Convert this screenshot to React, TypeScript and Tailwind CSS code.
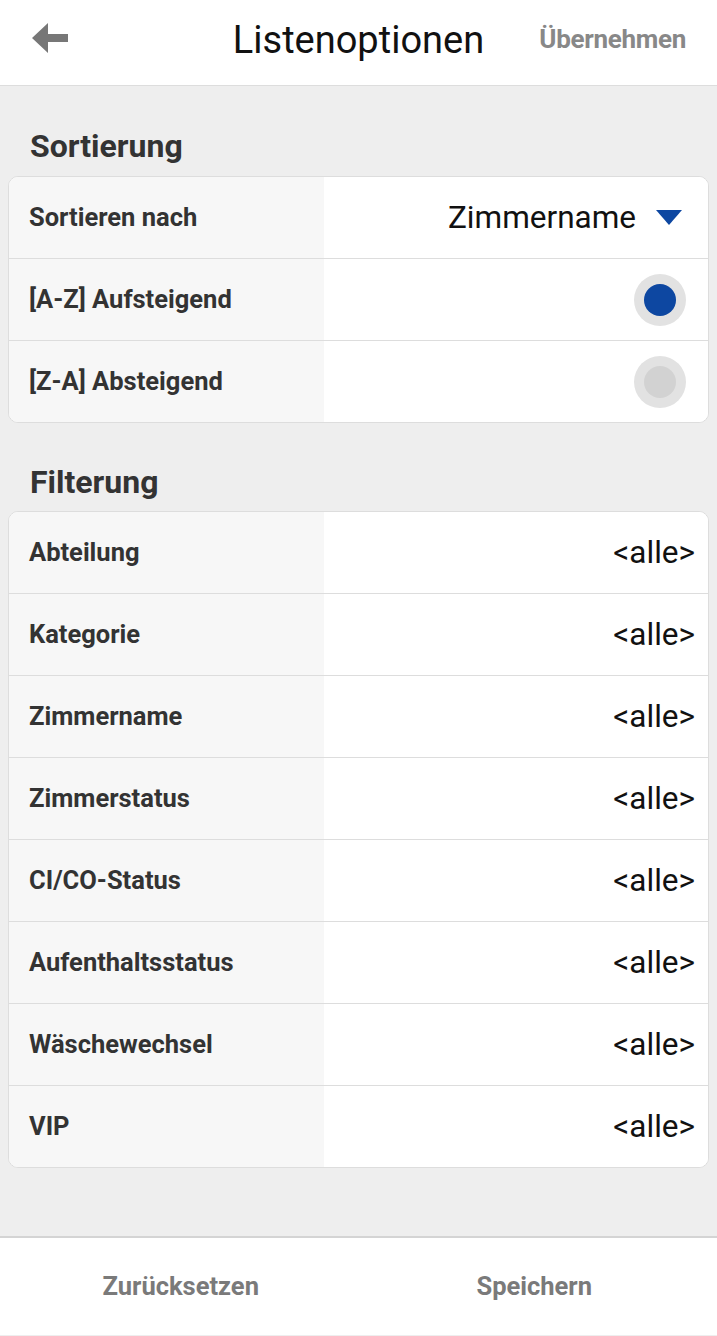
import React, { useState } from 'react';

const FILTERS = [
  'Abteilung',
  'Kategorie',
  'Zimmername',
  'Zimmerstatus',
  'CI/CO-Status',
  'Aufenthaltsstatus',
  'Wäschewechsel',
  'VIP',
];

function BackArrow() {
  return (
    <svg width="36" height="30" viewBox="0 0 36 30" className="block">
      <polygon points="0,15 16,0 16,11 36,11 36,19 16,19 16,30" fill="#777777" />
    </svg>
  );
}

function Radio({ checked }: { checked: boolean }) {
  return (
    <div className="w-[52px] h-[52px] rounded-full bg-[#e2e2e2] flex items-center justify-center">
      <div className={checked ? 'w-[32px] h-[32px] rounded-full bg-[#0d47a1]' : 'w-[32px] h-[32px] rounded-full bg-[#d2d2d2]'} />
    </div>
  );
}

function Row({ label, children, last }: { label: string; children?: React.ReactNode; last?: boolean }) {
  return (
    <div className={last ? 'flex h-[81px]' : 'flex h-[82px] border-b border-[#dddddd]'}>
      <div className="w-[315px] bg-[#f7f7f7] pl-[20px] flex items-center text-[25.5px] font-bold text-[#333333]">
        {label}
      </div>
      <div className="flex-1 bg-white flex items-center justify-end">{children}</div>
    </div>
  );
}

export default function App() {
  const [asc, setAsc] = useState(true);

  return (
    <div className="w-[717px] h-[1336px] flex flex-col bg-[#eeeeee] font-['Roboto','Liberation_Sans',sans-serif]">
      {/* Header */}
      <div className="h-[86px] bg-white border-b border-[#dddddd] grid grid-cols-[1fr_auto_1fr] items-center pb-[6px]">
        <div className="pl-[32px] pb-[4px]">
          <BackArrow />
        </div>
        <div className="text-[38px] text-[#111111] leading-none">Listenoptionen</div>
        <div className="flex justify-end pr-[31px]">
          <span className="text-[26px] font-bold text-[#888888] tracking-[-0.3px]">Übernehmen</span>
        </div>
      </div>

      {/* Content */}
      <div className="flex-1 px-2">
        <div className="pt-[42px] pb-[12px] pl-[22px] text-[32px] leading-[36px] font-bold text-[#333333]">Sortierung</div>
        <div className="rounded-[10px] border border-[#dddddd] overflow-hidden bg-white">
          <Row label="Sortieren nach">
            <span className="text-[31.5px] text-[#111111] mr-[20px]">Zimmername</span>
            <svg width="26" height="15" viewBox="0 0 26 15" className="mr-[26px]">
              <polygon points="0,0 26,0 13,15" fill="#0d47a1" />
            </svg>
          </Row>
          <Row label="[A-Z] Aufsteigend">
            <button onClick={() => setAsc(true)} className="mr-[22px]">
              <Radio checked={asc} />
            </button>
          </Row>
          <Row label="[Z-A] Absteigend" last>
            <button onClick={() => setAsc(false)} className="mr-[22px]">
              <Radio checked={!asc} />
            </button>
          </Row>
        </div>

        <div className="pt-[41px] pb-[11px] pl-[22px] text-[32px] leading-[36px] font-bold text-[#333333]">Filterung</div>
        <div className="rounded-[10px] border border-[#dddddd] overflow-hidden bg-white">
          {FILTERS.map((f, i) => (
            <Row key={f} label={f} last={i === FILTERS.length - 1}>
              <span className="text-[31.5px] text-[#111111] pr-[13px]">&lt;alle&gt;</span>
            </Row>
          ))}
        </div>
      </div>

      {/* Footer */}
      <div className="h-[100px] bg-white border-t-2 border-[#d4d4d4] flex border-b border-b-[#eeeeee]">
        <button className="flex-1 text-[25.5px] font-bold text-[#7a7a7a] pl-[4px]">Zurücksetzen</button>
        <button className="flex-1 text-[25.5px] font-bold text-[#7a7a7a] pr-[6px]">Speichern</button>
      </div>
    </div>
  );
}
